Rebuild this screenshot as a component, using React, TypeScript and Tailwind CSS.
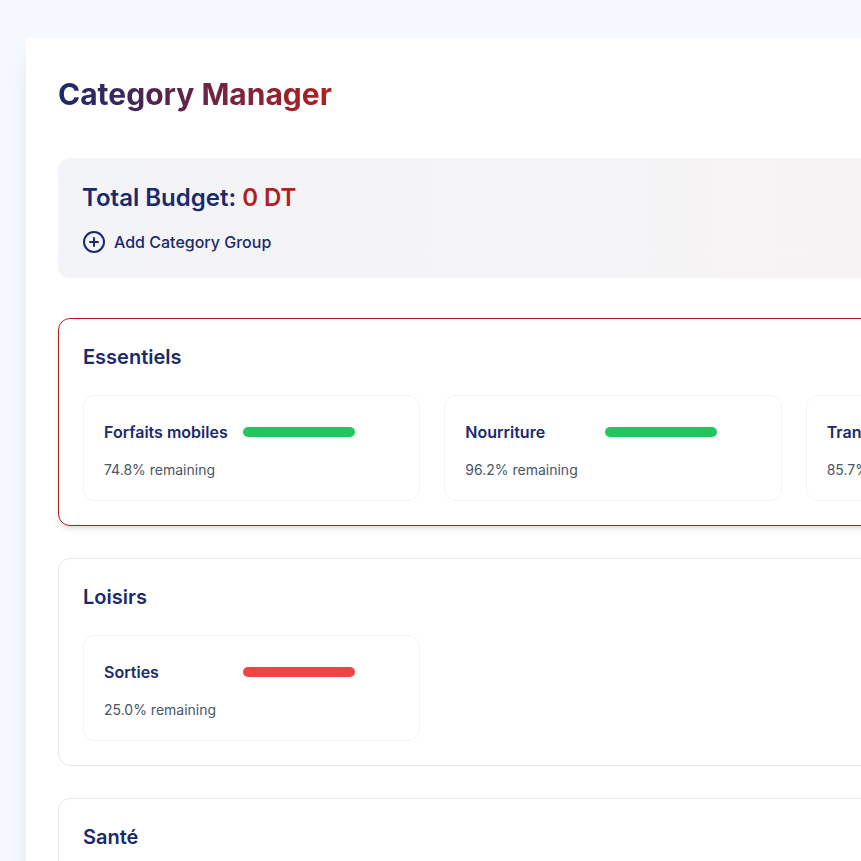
import { CirclePlus } from 'lucide-react';

type Category = { name: string; remaining: number };
type Group = { name: string; active?: boolean; categories: Category[] };

const groups: Group[] = [
  {
    name: 'Essentiels',
    active: true,
    categories: [
      { name: 'Forfaits mobiles', remaining: 74.8 },
      { name: 'Nourriture', remaining: 96.2 },
      { name: 'Transport', remaining: 85.7 },
    ],
  },
  { name: 'Loisirs', categories: [{ name: 'Sorties', remaining: 25 }] },
  { name: 'Santé', categories: [] },
];

function CategoryCard({ name, remaining }: Category) {
  return (
    <li className="rounded-xl border border-gray-100 bg-white p-5">
      <div className="mb-3 flex h-8 items-center gap-4 pr-11">
        <h3 className="min-w-0 flex-1 whitespace-nowrap text-base font-semibold text-[#1a2a6c]">{name}</h3>
        <div className={`h-[10px] w-28 shrink-0 rounded-full ${remaining > 50 ? 'bg-[#22c55e]' : 'bg-[#ef4444]'}`} />
      </div>
      <p className="text-sm text-[#4b5563]">{remaining.toFixed(1)}% remaining</p>
    </li>
  );
}

function GroupPanel({ name, active, categories }: Group) {
  return (
    <section className={`rounded-xl border bg-white p-6 ${active ? 'border-[#b21f1f] shadow-md' : 'border-[#e5e7eb]'}`}>
      <h2 className="mb-6 text-xl font-semibold text-[#1a2a6c]">{name}</h2>
      <ul className="grid min-h-[106px] grid-cols-3 gap-6">
        {categories.map((category) => (
          <CategoryCard key={category.name} {...category} />
        ))}
      </ul>
    </section>
  );
}

export default function App() {
  return (
    <div className="h-screen overflow-hidden bg-[#f5f8ff] px-[26px] pt-[38px] font-['Inter','Liberation_Sans',sans-serif]">
      <main className="min-w-[1174px] bg-white p-8 shadow-xl">
        <header className="mb-10 flex">
          <h1 className="bg-linear-to-r/srgb from-[#1a2a6c] to-[#b21f1f] bg-clip-text text-3xl leading-12 font-bold text-transparent">
            Category Manager
          </h1>
        </header>
        <div className="mb-10 rounded-xl bg-linear-to-r/srgb from-[#f3f4f8] to-[#f7f3f3] p-6">
          <h2 className="mb-4 text-2xl font-semibold text-[#1a2a6c]">
            Total Budget: <span className="text-[#b21f1f]">0 DT</span>
          </h2>
          <button type="button" className="flex items-center gap-2 text-base font-medium text-[#1a2a6c]">
            <CirclePlus size={24} aria-hidden="true" />
            Add Category Group
          </button>
        </div>
        <div className="flex flex-col gap-8">
          {groups.map((group) => (
            <GroupPanel key={group.name} {...group} />
          ))}
        </div>
      </main>
    </div>
  );
}
